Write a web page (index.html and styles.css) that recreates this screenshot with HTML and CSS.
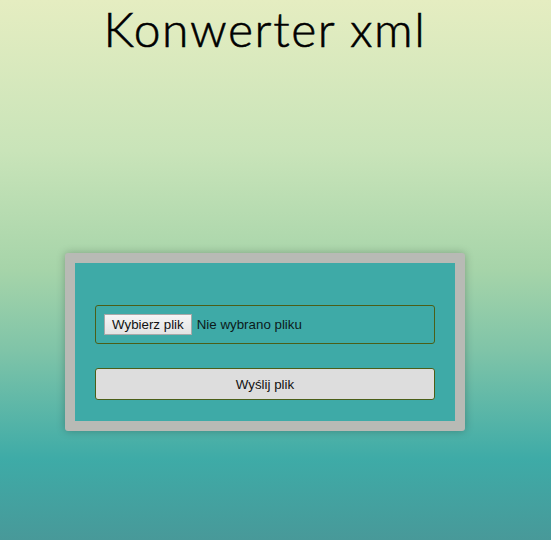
FILE: index.html
```html
<!DOCTYPE html>
<html lang="pl">
<head>
<meta charset="utf-8">
<title>Konwerter xml</title>
<link rel="stylesheet" href="styles.css">
</head>
<body>
<div class="page">
  <h1 class="title">Konwerter xml</h1>
  <form class="card">
    <div class="card-inner">
      <div class="file-field">
        <span class="file-btn">Wybierz plik</span>
        <span class="file-name">Nie wybrano pliku</span>
      </div>
      <button type="button" class="submit">Wyślij plik</button>
    </div>
  </form>
</div>
</body>
</html>
```

FILE: styles.css
```css
html, body {
  margin: 0;
  padding: 0;
  height: 100%;
}
body {
  background: linear-gradient(to bottom, #e5edc1 0%, #c9e4b9 28%, #a6d4a9 50%, #7fc4a8 65%, #3eaba7 85%, #489999 100%);
  font-family: "Liberation Sans", Arial, sans-serif;
  overflow: hidden;
}
.page {
  width: 530px;
  display: flex;
  flex-direction: column;
  align-items: center;
  padding-top: 3px;
}
.title {
  margin: 0;
  font-family: Lato, "Open Sans", sans-serif;
  font-weight: 300;
  -webkit-text-stroke: 0.6px #000;
  font-size: 48px;
  line-height: 52px;
  letter-spacing: 1.6px;
  color: #000;
  height: 250px;
}
.card {
  width: 400px;
  box-sizing: border-box;
  padding: 10px;
  background: #b8bab5;
  border-radius: 3px;
  box-shadow: 0 0 8px rgba(0, 0, 0, 0.25);
}
.card-inner {
  background: #3eaaa7;
  padding: 42px 20px 21px;
  display: flex;
  flex-direction: column;
  gap: 24px;
}
.file-field {
  height: 39px;
  box-sizing: border-box;
  border: 1px solid #4b5e18;
  border-radius: 3px;
  display: flex;
  align-items: center;
  padding-left: 8px;
  gap: 5px;
  font-size: 13.33px;
}
.file-btn {
  display: inline-block;
  box-sizing: border-box;
  height: 21px;
  line-height: 19px;
  padding: 0 7px;
  border: 1px solid #a9a9a9;
  background: linear-gradient(#f5f5f5, #e3e3e3);
  color: #111;
  font-size: 13.33px;
}
.file-name {
  color: #0c1a1a;
}
.submit {
  height: 32px;
  border: 1px solid #4b5e18;
  border-radius: 3px;
  background: #dddddd;
  font-family: "Liberation Sans", Arial, sans-serif;
  font-size: 13.33px;
  color: #111;
  padding: 0;
}
```
